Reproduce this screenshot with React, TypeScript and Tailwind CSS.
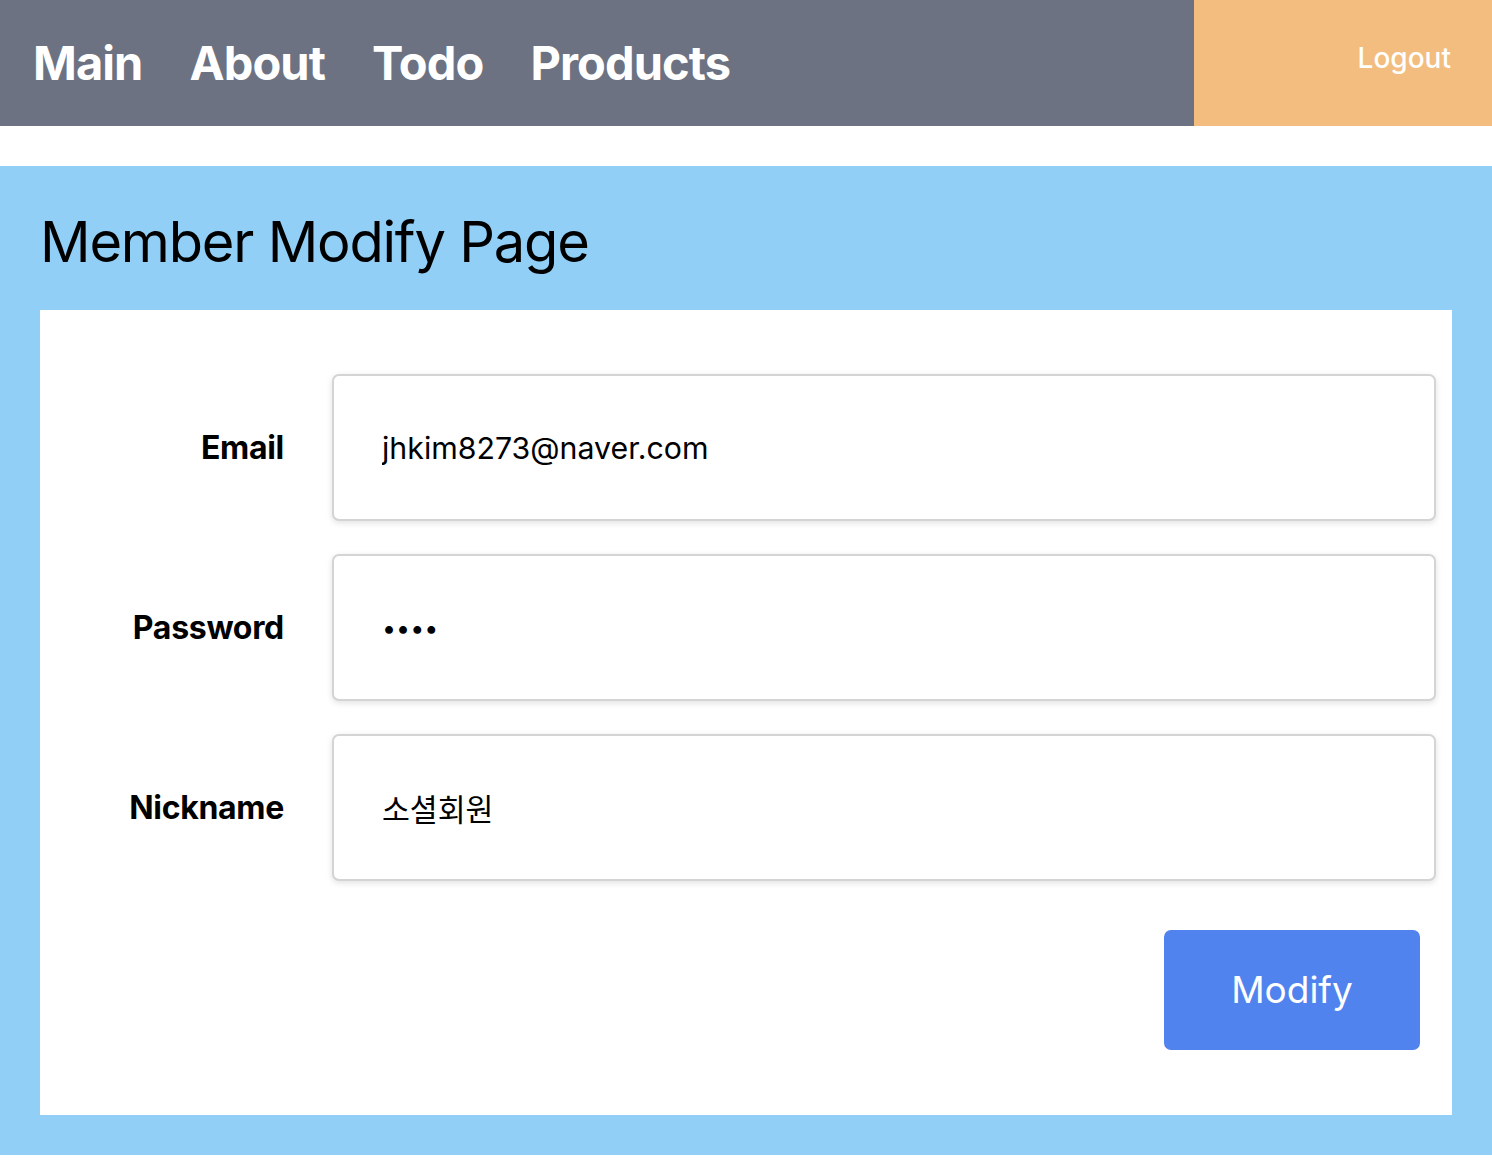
const font = { fontFamily: "Inter, 'Noto Sans CJK KR', sans-serif" };

const navItems = ["Main", "About", "Todo", "Products"];

const fields = [
  { label: "Email", type: "text", value: "jhkim8273@naver.com" },
  { label: "Password", type: "password", value: "1111" },
  { label: "Nickname", type: "text", value: "소셜회원" },
];

const Nav = () => (
  <nav className="flex h-[126px] w-full">
    <div className="flex w-4/5 items-center bg-[#6c7281] pl-[9.5px]">
      <ul className="flex">
        {navItems.map((item) => (
          <li
            key={item}
            className="px-[23.5px] text-[47px] font-bold tracking-[-0.9px] text-white"
          >
            {item}
          </li>
        ))}
      </ul>
    </div>
    <div className="flex w-1/5 items-center justify-end bg-[#f2bd7e] pr-[41px] pb-[10px]">
      <span className="text-[28px] font-medium text-white">Logout</span>
    </div>
  </nav>
);

const App = () => {
  return (
    <div className="min-h-screen bg-white" style={font}>
      <Nav />
      <div className="mt-[40px] bg-[#91cff7] px-[40px] pt-[42px] pb-[40px]">
        <h1 className="mb-[34px] text-[56px] leading-[68px] tracking-[-1.2px] text-black">
          Member Modify Page
        </h1>
        <div className="bg-white pt-[64px] pr-[16px] pb-[65px]">
          <div className="flex flex-col gap-[33px]">
            {fields.map((field) => (
              <div key={field.label} className="flex items-center">
                <label className="w-[244px] text-right text-[32px] font-bold tracking-[-0.3px] text-black">
                  {field.label}
                </label>
                <input
                  type={field.type}
                  value={field.value}
                  readOnly
                  className={
                    field.type === "password"
                      ? "ml-[48px] h-[147px] flex-1 rounded-[7px] border-2 border-[#d4d4d4] bg-white pl-[48px] text-[25px] text-black shadow-[0_2px_6px_rgba(0,0,0,0.12)] outline-none"
                      : "ml-[48px] h-[147px] flex-1 rounded-[7px] border-2 border-[#d4d4d4] bg-white pl-[48px] text-[30.3px] text-black shadow-[0_2px_6px_rgba(0,0,0,0.12)] outline-none"
                  }
                  style={font}
                />
              </div>
            ))}
          </div>
          <div className="mt-[49px] flex justify-end pr-[16px]">
            <button className="h-[120px] w-[256px] rounded-[7px] bg-[#5083ee] text-[37px] text-white">
              Modify
            </button>
          </div>
        </div>
      </div>
    </div>
  );
};

export default App;
